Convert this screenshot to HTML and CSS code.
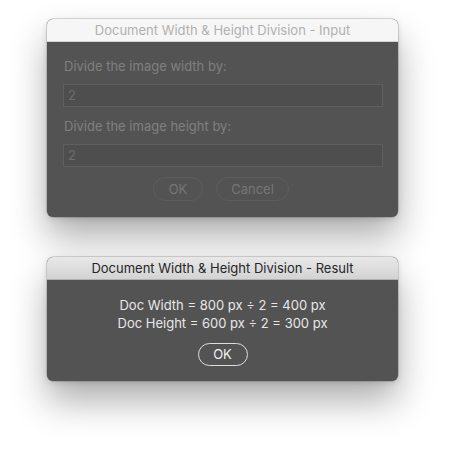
FILE: index.html
```html
<!DOCTYPE html>
<html>
<head>
<meta charset="utf-8">
<link rel="stylesheet" href="styles.css">
</head>
<body>
<div class="stage">
  <div class="window inactive">
    <div class="titlebar">Document Width &amp; Height Division - Input</div>
    <div class="content form">
      <div class="label">Divide the image width by:</div>
      <div class="field">2</div>
      <div class="label second">Divide the image height by:</div>
      <div class="field">2</div>
      <div class="buttons">
        <div class="btn ok">OK</div>
        <div class="btn cancel">Cancel</div>
      </div>
    </div>
  </div>
  <div class="window active">
    <div class="titlebar">Document Width &amp; Height Division - Result</div>
    <div class="content result">
      <div class="line">Doc Width = 800 px ÷ 2 = 400 px</div>
      <div class="line">Doc Height = 600 px ÷ 2 = 300 px</div>
      <div class="btn default">OK</div>
    </div>
  </div>
</div>
</body>
</html>
```
FILE: styles.css
```css
html, body {
  margin: 0;
  padding: 0;
  background: #ffffff;
}
body {
  font-family: Inter, "Liberation Sans", sans-serif;
  font-size: 13px;
  width: 455px;
  height: 463px;
  overflow: hidden;
}
.stage {
  display: flex;
  flex-direction: column;
  padding: 19px 0 0 47px;
  gap: 40px;
}
.window {
  width: 351px;
  border-radius: 6px;
  overflow: hidden;
  background: #535353;
  box-shadow: 0 20px 36px rgba(0,0,0,0.32), 0 0 0 0.5px rgba(0,0,0,0.25), 0 2px 6px rgba(0,0,0,0.12);
}
.titlebar {
  height: 23px;
  line-height: 23px;
  text-align: center;
  font-size: 13px;
  box-sizing: border-box;
}
.inactive .titlebar {
  background: #f6f6f6;
  color: #b0b0b0;
  border-bottom: 1px solid #d4d4d4;
}
.active .titlebar {
  background: linear-gradient(#e8e8e8, #d3d3d3);
  color: #262626;
  border-bottom: 1px solid #b0b0b0;
}
.content.form {
  padding: 16px 15px 16px 16px;
  display: flex;
  flex-direction: column;
  color: #808080;
}
.label {
  height: 17px;
  line-height: 17px;
  padding-left: 1px;
}
.label.second {
  margin-top: 11px;
}
.field {
  margin-top: 9px;
  height: 23px;
  box-sizing: border-box;
  border: 1px solid #5f5f5f;
  background: #4e4e4e;
  color: #6e6e6e;
  padding-left: 4px;
  line-height: 21px;
}
.buttons {
  display: flex;
  justify-content: center;
  gap: 13px;
  margin-top: 10px;
  padding-right: 4px;
}
.btn {
  height: 24px;
  box-sizing: border-box;
  border-radius: 12px;
  text-align: center;
  line-height: 22px;
}
.form .btn {
  border: 1px solid #5d5d5d;
  color: #767676;
}
.form .ok { width: 50px; }
.form .cancel { width: 73px; }
.content.result {
  display: flex;
  flex-direction: column;
  align-items: center;
  padding: 16px 0 15px;
  color: #e8e8e8;
}
.line {
  height: 18px;
  line-height: 18px;
}
.btn.default {
  margin-top: 11px;
  width: 50px;
  height: 23px;
  border: 1.5px solid #dedede;
  color: #f2f2f2;
  line-height: 20px;
}
```
